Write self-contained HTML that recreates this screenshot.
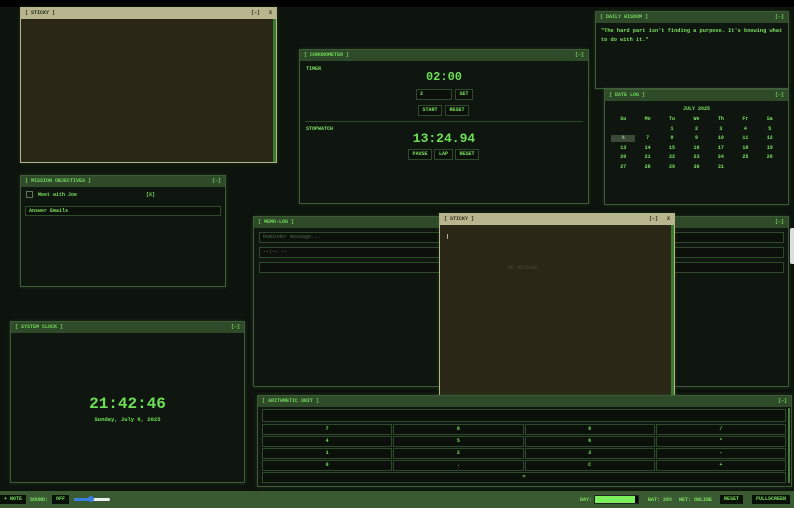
<!DOCTYPE html>
<html><head><meta charset="utf-8"><style>
*{box-sizing:border-box;margin:0;padding:0}
body{width:794px;height:508px;background:#0d130d;overflow:hidden;position:relative;font-family:"Liberation Mono",monospace;color:#7be05f;font-size:5px}
.top{position:absolute;left:0;top:0;width:794px;height:7px;background:#000}
.p{position:absolute;background:#0f160f;border:1px solid #3e5c37;box-shadow:0 0 4px rgba(60,110,50,.35)}
.h{height:11px;background:#2f4a29;color:#6fd85a;font-size:5px;line-height:11px;padding:0 4px;position:relative;font-weight:bold}
.h .r{position:absolute;right:4px;top:0}
.st{background:#2a2717;border:1px solid #b4b48b}
.st .h{background:#b7b68e;color:#2a2a1a}
.st .bar{position:absolute;right:0;top:11px;bottom:0;width:3px;background:#3c7a2e}
.b{position:absolute;border:1px solid #2f4a2a;background:#0b100b;color:#7be05f;text-align:center;font-size:5px;font-weight:bold}
.lbl{position:absolute;font-size:5px;font-weight:bold}
.big{position:absolute;text-align:center;color:#6ee058;font-weight:bold}
.cal{position:absolute;left:6px;right:6px;top:26px;display:grid;grid-template-columns:repeat(7,1fr);row-gap:2.5px;font-size:5px;text-align:center;font-weight:bold}
.cal div{height:7px;line-height:7px}
.bottom{position:absolute;left:0;top:491px;width:794px;height:17px;background:#3a5a31}
.bb{position:absolute;top:4px;height:9px;background:#081008;color:#7be05f;font-size:5px;line-height:9px;padding:0 4px;font-weight:bold}
.g{display:grid;gap:1px;position:absolute}
</style></head><body>
<div class="top"></div>

<div class="p st" style="left:20px;top:7px;width:257px;height:156px"><div class="h">[ STICKY ]<span class="r">[–] &nbsp; X</span></div><div class="bar"></div></div>

<div class="p" style="left:20px;top:175px;width:206px;height:112px"><div class="h">[ MISSION OBJECTIVES ]<span class="r">[–]</span></div>
<div style="position:absolute;left:5px;top:15px;width:7px;height:7px;border:1px solid #5a7a52"></div>
<div class="lbl" style="left:17px;top:16px">Meet with Joe</div><div class="lbl" style="left:125px;top:16px">[X]</div>
<div class="b" style="left:4px;top:30px;width:196px;height:10px;text-align:left;padding-left:3px;line-height:8px">Answer Emails</div></div>

<div class="p" style="left:299px;top:49px;width:290px;height:155px"><div class="h">[ CHRONOMETER ]<span class="r">[–]</span></div>
<div class="lbl" style="left:6px;top:16px">TIMER</div>
<div class="big" style="left:0;right:0;top:20px;font-size:12px">02:00</div>
<div class="b" style="left:116px;top:39px;width:36px;height:11px;text-align:left;padding-left:3px;line-height:9px">2</div>
<div class="b" style="left:155px;top:39px;width:18px;height:11px;line-height:9px">SET</div>
<div class="b" style="left:118px;top:55px;width:24px;height:11px;line-height:9px">START</div>
<div class="b" style="left:145px;top:55px;width:24px;height:11px;line-height:9px">RESET</div>
<div style="position:absolute;left:5px;right:5px;top:71px;height:1px;background:#2f4a2a"></div>
<div class="lbl" style="left:6px;top:76px">STOPWATCH</div>
<div class="big" style="left:0;right:0;top:81px;font-size:13px">13:24.94</div>
<div class="b" style="left:108px;top:99px;width:24px;height:11px;line-height:9px">PAUSE</div>
<div class="b" style="left:134px;top:99px;width:19px;height:11px;line-height:9px">LAP</div>
<div class="b" style="left:155px;top:99px;width:24px;height:11px;line-height:9px">RESET</div></div>

<div class="p" style="left:595px;top:11px;width:194px;height:78px"><div class="h">[ DAILY WISDOM ]<span class="r">[–]</span></div>
<div style="position:absolute;left:5px;top:15px;right:4px;font-size:5.3px;line-height:9px;font-weight:bold">"The hard part isn't finding a purpose. It's knowing what to do with it."</div></div>

<div class="p" style="left:604px;top:89px;width:185px;height:116px"><div class="h">[ DATE LOG ]<span class="r">[–]</span></div>
<div class="lbl" style="left:0;right:0;top:16px;text-align:center">JULY 2025</div>
<div class="cal"><div>Su</div><div>Mo</div><div>Tu</div><div>We</div><div>Th</div><div>Fr</div><div>Sa</div>
<div></div><div></div><div>1</div><div>2</div><div>3</div><div>4</div><div>5</div>
<div style="background:#3a4a36;color:#9ab88a">6</div><div>7</div><div>8</div><div>9</div><div>10</div><div>11</div><div>12</div>
<div>13</div><div>14</div><div>15</div><div>16</div><div>17</div><div>18</div><div>19</div>
<div>20</div><div>21</div><div>22</div><div>23</div><div>24</div><div>25</div><div>26</div>
<div>27</div><div>28</div><div>29</div><div>30</div><div>31</div></div></div>

<div class="p" style="left:253px;top:216px;width:536px;height:171px"><div class="h">[ MEMO-LOG ]<span class="r">[–]</span></div>
<div class="b" style="left:5px;top:15px;width:525px;height:11px;text-align:left;padding-left:3px;line-height:9px;color:#4f6a47;font-weight:normal">Reminder message...</div>
<div class="b" style="left:5px;top:30px;width:525px;height:11px;text-align:left;padding-left:3px;line-height:9px;color:#7aa86a;font-weight:normal">--:-- --</div>
<div class="b" style="left:5px;top:45px;width:525px;height:11px"></div></div>

<div class="p st" style="left:439px;top:213px;width:236px;height:185px"><div class="h">[ STICKY ]<span class="r">[–] &nbsp; X</span></div><div class="bar"></div>
<div style="position:absolute;left:7px;top:20px;width:1px;height:5px;background:#b0b090"></div>
<div style="position:absolute;left:68px;top:51px;color:#4a4a34;font-size:5px">NO MESSAGE</div></div>

<div class="p" style="left:10px;top:321px;width:235px;height:162px"><div class="h">[ SYSTEM CLOCK ]<span class="r">[–]</span></div>
<div class="big" style="left:0;right:0;top:73px;font-size:16px">21:42:46</div>
<div class="big" style="left:0;right:0;top:94px;font-size:5.5px">Sunday, July 6, 2025</div></div>

<div class="p" style="left:257px;top:395px;width:535px;height:92px"><div class="h">[ ARITHMETIC UNIT ]<span class="r">[–]</span></div>
<div class="b" style="left:4px;top:13px;width:524px;height:13px"></div>
<div class="g" style="left:4px;top:28px;width:524px;grid-template-columns:repeat(4,1fr);grid-auto-rows:11px">
<div class="b" style="position:static;line-height:9px">7</div><div class="b" style="position:static;line-height:9px">8</div><div class="b" style="position:static;line-height:9px">9</div><div class="b" style="position:static;line-height:9px">/</div>
<div class="b" style="position:static;line-height:9px">4</div><div class="b" style="position:static;line-height:9px">5</div><div class="b" style="position:static;line-height:9px">6</div><div class="b" style="position:static;line-height:9px">*</div>
<div class="b" style="position:static;line-height:9px">1</div><div class="b" style="position:static;line-height:9px">2</div><div class="b" style="position:static;line-height:9px">3</div><div class="b" style="position:static;line-height:9px">-</div>
<div class="b" style="position:static;line-height:9px">0</div><div class="b" style="position:static;line-height:9px">.</div><div class="b" style="position:static;line-height:9px">C</div><div class="b" style="position:static;line-height:9px">+</div>
<div class="b" style="position:static;line-height:9px;grid-column:1/5">=</div></div>
<div style="position:absolute;right:1px;top:12px;width:2px;height:75px;background:#4a7a3e"></div></div>

<div style="position:absolute;left:790px;top:228px;width:4px;height:36px;background:#ddd;border-radius:2px 0 0 2px"></div>

<div class="bottom">
<div class="bb" style="left:0">+ NOTE</div>
<div class="lbl" style="left:30px;top:6px;color:#7be05f">SOUND:</div>
<div class="bb" style="left:52px">OFF</div>
<div style="position:absolute;left:74px;top:7px;width:36px;height:3px;background:#eee;border-radius:2px"><div style="width:19px;height:3px;background:#3a7de0;border-radius:2px"></div></div>
<div style="position:absolute;left:88px;top:5px;width:6px;height:6px;border-radius:50%;background:#3a7de0"></div>
<div class="lbl" style="left:580px;top:6px">DAY:</div>
<div style="position:absolute;left:594px;top:4px;width:45px;height:9px;background:#000;border:1px solid #222"><div style="width:40px;height:7px;background:#7cf05c"></div></div>
<div class="lbl" style="left:648px;top:6px">BAT: 26%</div>
<div class="lbl" style="left:679px;top:6px">NET: ONLINE</div>
<div class="bb" style="left:720px">RESET</div>
<div class="bb" style="left:752px">FULLSCREEN</div>
</div>
</body></html>
